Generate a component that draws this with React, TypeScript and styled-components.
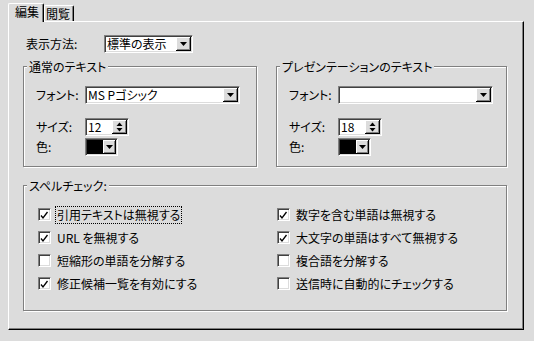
import React from "react";
import styled, { createGlobalStyle } from "styled-components";

const GlobalStyle = createGlobalStyle`
  body {
    margin: 0;
    background: #dcdcdc;
  }
`;

type Check = { label: string; checked: boolean; focused?: boolean };

const spellLeft: Check[] = [
  { label: "引用テキストは無視する", checked: true, focused: true },
  { label: "URL を無視する", checked: true },
  { label: "短縮形の単語を分解する", checked: false },
  { label: "修正候補一覧を有効にする", checked: true },
];

const spellRight: Check[] = [
  { label: "数字を含む単語は無視する", checked: true },
  { label: "大文字の単語はすべて無視する", checked: true },
  { label: "複合語を分解する", checked: false },
  { label: "送信時に自動的にチェックする", checked: false },
];

const DownArrow = () => (
  <svg width="7" height="4" viewBox="0 0 7 4">
    <polygon points="0,0 7,0 3.5,4" fill="#000" />
  </svg>
);

const SpinArrows = () => (
  <svg width="7" height="10" viewBox="0 0 7 10">
    <polygon points="0.5,4 6.5,4 3.5,0.5" fill="#000" />
    <polygon points="0.5,6 6.5,6 3.5,9.5" fill="#000" />
  </svg>
);

const CheckMark = () => (
  <svg width="11" height="11" viewBox="0 0 11 11">
    <path d="M2 6.5 L4 9 L8.5 3" fill="none" stroke="#000" strokeWidth="1.3" />
  </svg>
);

const Select = ({ value, width }: { value: string; width: number }) => (
  <Field $w={width}>
    <Value>{value}</Value>
    <ArrowBtn $w={15}>
      <DownArrow />
    </ArrowBtn>
  </Field>
);

const Spinner = ({ value }: { value: string }) => (
  <Field $w={44}>
    <Value>{value}</Value>
    <ArrowBtn $w={15}>
      <SpinArrows />
    </ArrowBtn>
  </Field>
);

const ColorPicker = () => (
  <ColorField>
    <Swatch />
    <ArrowBtn $w={13}>
      <DownArrow />
    </ArrowBtn>
  </ColorField>
);

const TextGroup = ({
  title,
  font,
  size,
  width,
}: {
  title: string;
  font: string;
  size: string;
  width: number;
}) => (
  <Group $w={width}>
    <Legend>{title}</Legend>
    <Rows>
      <FormRow $top={0}>
        <Label>フォント:</Label>
        <Select value={font} width={155} />
      </FormRow>
      <FormRow $top={14}>
        <Label>サイズ:</Label>
        <Spinner value={size} />
      </FormRow>
      <FormRow $top={2}>
        <Label>色:</Label>
        <ColorPicker />
      </FormRow>
    </Rows>
  </Group>
);

const CheckItem = ({ item }: { item: Check }) => (
  <CheckRow>
    <Box>{item.checked && <CheckMark />}</Box>
    <CheckLabel $focused={!!item.focused}>{item.label}</CheckLabel>
  </CheckRow>
);

const App = () => {
  return (
    <Window>
      <GlobalStyle />
      <TabStrip>
        <Tab $active>編集</Tab>
        <Tab>閲覧</Tab>
      </TabStrip>
      <Panel>
        <DisplayRow>
          <DisplayLabel>表示方法:</DisplayLabel>
          <Select value="標準の表示" width={89} />
        </DisplayRow>
        <GroupRow>
          <TextGroup title="通常のテキスト" font="MS Pゴシック" size="12" width={234} />
          <TextGroup title="プレゼンテーションのテキスト" font="" size="18" width={231} />
        </GroupRow>
        <SpellGroup>
          <Legend>スペルチェック:</Legend>
          <CheckGrid>
            <CheckColumn>
              {spellLeft.map((c) => (
                <CheckItem key={c.label} item={c} />
              ))}
            </CheckColumn>
            <CheckColumn>
              {spellRight.map((c) => (
                <CheckItem key={c.label} item={c} />
              ))}
            </CheckColumn>
          </CheckGrid>
        </SpellGroup>
      </Panel>
    </Window>
  );
};

const Window = styled.div`
  width: 534px;
  height: 341px;
  box-sizing: border-box;
  padding: 3px 0 0 8px;
  background: #dcdcdc;
  font-family: "Noto Sans CJK JP", "Liberation Sans", sans-serif;
  font-feature-settings: "palt";
  font-size: 12px;
  line-height: 14px;
  color: #000;
`;

const TabStrip = styled.div`
  display: flex;
  align-items: flex-end;
  height: 18px;
`;

const Tab = styled.div<{ $active?: boolean }>`
  position: relative;
  z-index: 1;
  box-sizing: border-box;
  display: flex;
  align-items: center;
  background: #dcdcdc;
  border-top: 1px solid #fff;
  border-left: 1px solid #fff;
  border-right: 1px solid #000;
  box-shadow: inset -1px 0 0 #808080;
  width: ${(p) => (p.$active ? 36 : 30)}px;
  height: ${(p) => (p.$active ? 19 : 16)}px;
  margin-bottom: ${(p) => (p.$active ? -1 : 0)}px;
  padding: ${(p) => (p.$active ? "0 0 2px 6px" : "0 0 0 1px")};
  border-radius: 2px 2px 0 0;
`;

const Panel = styled.div`
  width: 516px;
  height: 309px;
  box-sizing: border-box;
  border-top: 1px solid #fff;
  border-left: 1px solid #fff;
  border-right: 1px solid #000;
  border-bottom: 1px solid #000;
  box-shadow: inset -1px -1px 0 #808080;
  padding: 13px 0 0 14px;
  display: flex;
  flex-direction: column;
`;

const DisplayRow = styled.div`
  display: flex;
  align-items: center;
  height: 18px;
`;

const DisplayLabel = styled.span`
  width: 78px;
  padding-left: 3px;
`;

const GroupRow = styled.div`
  display: flex;
  gap: 19px;
  margin-top: 13px;
`;

const Group = styled.div<{ $w: number }>`
  width: ${(p) => p.$w}px;
  height: 101px;
  box-sizing: border-box;
  border: 1px solid #808080;
  box-shadow: 1px 1px 0 #fff, inset 1px 1px 0 #fff;
`;

const SpellGroup = styled(Group).attrs({ $w: 484 })`
  height: 126px;
  margin-top: 18px;
`;

const Legend = styled.div`
  width: fit-content;
  margin: -7px 0 0 3px;
  padding: 0 2px;
  background: #dcdcdc;
  white-space: nowrap;
`;

const Rows = styled.div`
  display: flex;
  flex-direction: column;
  margin-top: 12px;
  padding-left: 12px;
`;

const FormRow = styled.div<{ $top: number }>`
  display: flex;
  align-items: center;
  margin-top: ${(p) => p.$top}px;
`;

const Label = styled.span`
  width: 49px;
  white-space: nowrap;
`;

const Field = styled.div<{ $w: number }>`
  width: ${(p) => p.$w}px;
  height: 18px;
  box-sizing: border-box;
  display: flex;
  align-items: center;
  background: #fff;
  border-top: 1px solid #808080;
  border-left: 1px solid #808080;
  border-right: 1px solid #fff;
  border-bottom: 1px solid #fff;
  box-shadow: inset 1px 1px 0 #404040, inset -1px -1px 0 #dcdcdc;
  padding: 0 1px 0 2px;
`;

const Value = styled.span`
  flex: 1;
  white-space: nowrap;
`;

const ArrowBtn = styled.div<{ $w: number }>`
  width: ${(p) => p.$w}px;
  height: 14px;
  flex: none;
  display: flex;
  align-items: center;
  justify-content: center;
  background: #dcdcdc;
  box-shadow: inset -1px -1px 0 #000, inset 1px 1px 0 #fff,
    inset -2px -2px 0 #808080;
`;

const ColorField = styled(Field).attrs({ $w: 33 })`
  background: #dcdcdc;
  padding: 0 1px 0 1px;
`;

const Swatch = styled.div`
  flex: 1;
  height: 14px;
  background: #000;
`;

const CheckGrid = styled.div`
  display: grid;
  grid-template-columns: 239px 1fr;
  margin-top: 10px;
  padding-left: 14px;
`;

const CheckColumn = styled.div`
  display: flex;
  flex-direction: column;
`;

const CheckRow = styled.div`
  display: flex;
  align-items: center;
  height: 23px;
`;

const Box = styled.div`
  width: 13px;
  height: 13px;
  box-sizing: border-box;
  flex: none;
  background: #fff;
  border-top: 1px solid #808080;
  border-left: 1px solid #808080;
  border-right: 1px solid #fff;
  border-bottom: 1px solid #fff;
  box-shadow: inset 1px 1px 0 #404040, inset -1px -1px 0 #dcdcdc;
  margin-right: 4px;
  svg {
    display: block;
  }
`;

const CheckLabel = styled.span<{ $focused: boolean }>`
  padding: 1px;
  border: 1px dotted ${(p) => (p.$focused ? "#000" : "transparent")};
  white-space: nowrap;
`;

export default App;
